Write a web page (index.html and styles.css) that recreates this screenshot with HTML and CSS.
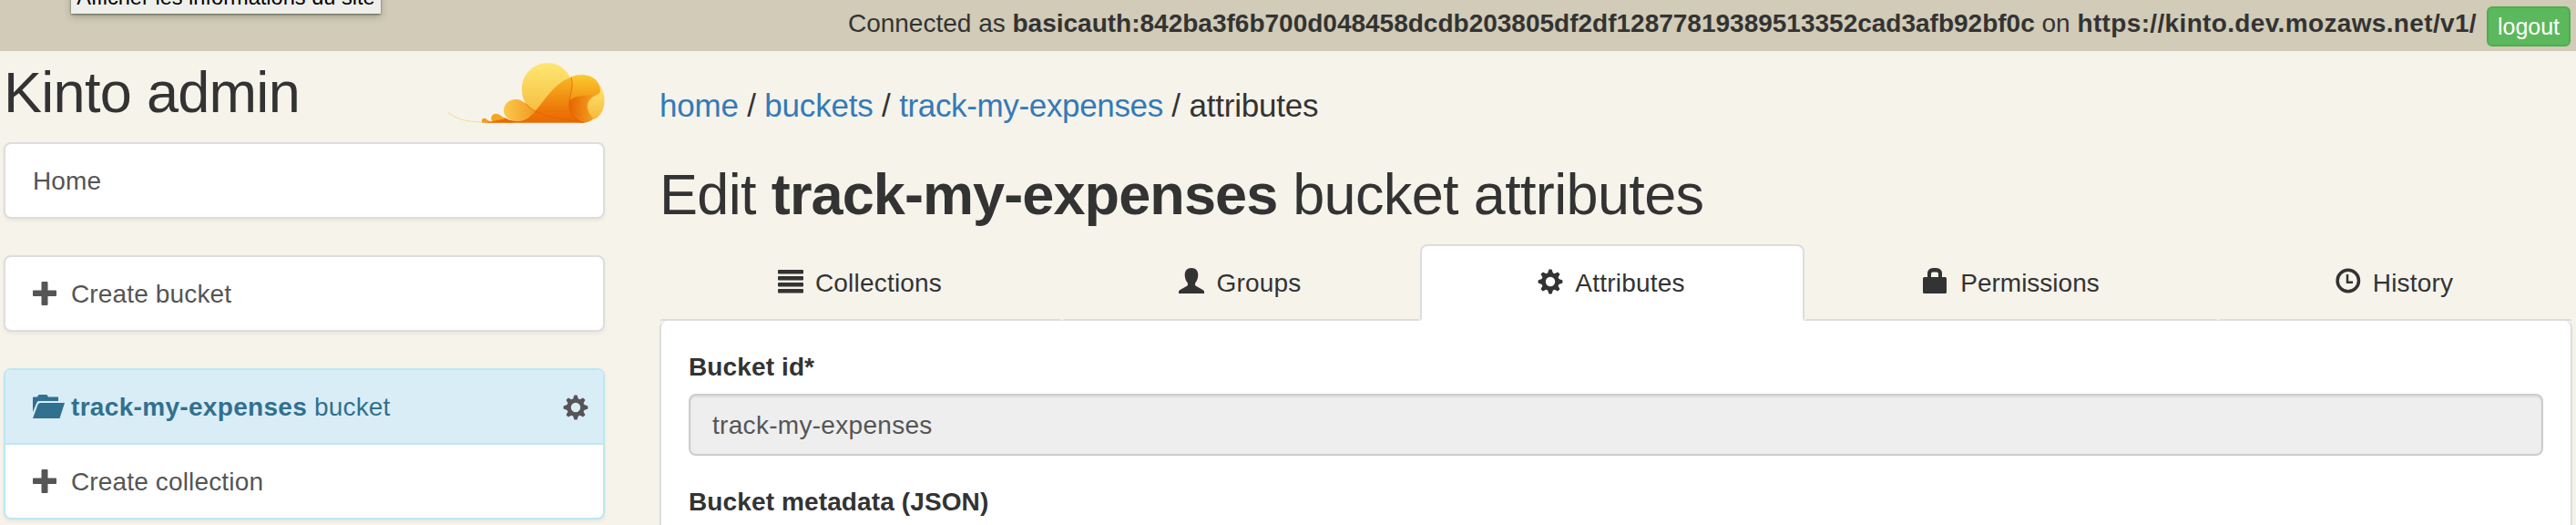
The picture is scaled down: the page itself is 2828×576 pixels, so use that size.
FILE: index.html
```html
<!DOCTYPE html>
<html lang="en">
<head>
<meta charset="utf-8">
<title>Kinto admin</title>
<link rel="stylesheet" href="styles.css">
</head>
<body>
<svg class="defs" width="0" height="0" aria-hidden="true">
  <symbol id="plus" viewBox="0 0 28 28"><path d="M10.500 1h5q1 0 1 1v8.500h8.500q1 0 1 1v4.500q0 1-1 1h-8.500v9q0 1-1 1h-5q-1 0-1-1v-9h-8.500q-1 0-1-1v-4.500q0-1 1-1h8.500v-8.500q0-1 1-1z"/></symbol>
  <symbol id="cog" viewBox="-14 -14 28 28"><path fill-rule="evenodd" d="M-1.500-13.500h3l1.400 4 1.800.8 3.400-1.900 2.400 2.400-1.900 3.400.8 1.900 4 1.400v3l-4 1.400-.8 1.900 1.900 3.400-2.400 2.400-3.400-1.900-1.800.8-1.400 4h-3l-1.400-4-1.800-.8-3.400 1.900-2.400-2.400 1.900-3.400-.8-1.900-4-1.400v-3l4-1.400.8-1.900-1.900-3.400 2.400-2.400 3.400 1.900 1.800-.8zM0-5.200a5.200 5.200 0 1 0 0 10.400a5.200 5.200 0 1 0 0-10.400z"/></symbol>
</svg>
<header class="session">
  <div class="tooltip">Afficher les informations du site</div>
  <span class="session-text">Connected as <strong>basicauth:842ba3f6b700d048458dcdb203805df2df12877819389513352cad3afb92bf0c</strong> on <strong class="server">https://kinto.dev.mozaws.net/v1/</strong></span>
  <button class="logout">logout</button>
</header>
<div class="layout">
  <aside class="sidebar">
    <div class="brand">
      <h1 class="title">Kinto admin</h1>
      <svg class="logo" viewBox="36 27 516 198">
        <defs>
          <linearGradient id="g1" x1="0" y1="0" x2="0" y2="1"><stop offset="0" stop-color="#fee773"/><stop offset="1" stop-color="#f6b93b"/></linearGradient>
          <linearGradient id="g2" x1="0" y1="0" x2="0" y2="1"><stop offset="0" stop-color="#f8b623"/><stop offset=".75" stop-color="#ec7508"/><stop offset="1" stop-color="#e86a03"/></linearGradient>
          <linearGradient id="g3" x1="0" y1="0" x2="0" y2="1"><stop offset="0" stop-color="#fccb30"/><stop offset="1" stop-color="#f0900f"/></linearGradient>
          <linearGradient id="g4" x1="0" y1="0" x2="1" y2="0"><stop offset="0" stop-color="#fbc94d"/><stop offset="1" stop-color="#f19a20"/></linearGradient>
          <linearGradient id="g5" x1="0" y1="0" x2="1" y2="0"><stop offset="0" stop-color="#e66602"/><stop offset="1" stop-color="#f4a321"/></linearGradient>
        </defs>
        <path d="M36 191C65 214 105 222 152 222" fill="none" stroke="#f6dc90" stroke-width="3"/>
        <path d="M148 224C144 213 150 208 156 209C164 211 166 218 176 219L182 224z" fill="#f29d20"/>
        <path d="M182 222C173 207 180 195 192 194C208 194 212 206 230 211L250 224z" fill="#f5a51f"/>
        <path d="M363 27C409 27 442 64 444 100C446 132 420 200 380 203C340 196 306 184 290 158C282 145 279 132 279 112C279 65 318 27 363 27z" fill="url(#g1)"/>
        <path d="M160 224L225 210C245 221 280 222 300 206C350 168 370 100 441 74C500 100 535 170 510 213Q496 224 480 224z" fill="url(#g2)"/>
        <path d="M258 147C287 147 299 172 323 187C301 211 284 219 262 219C238 219 219 204 219 184C219 162 237 147 258 147z" fill="url(#g4)"/>
        <path d="M534 98C551 119 555 151 547 176C541 196 527 210 514 213C470 190 490 150 510 135C525 135 538 125 534 98z" fill="url(#g1)"/>
        <path d="M441 73C452 68 463 66 478 66C515 66 537 92 537 117C537 130 524 135 510 135C475 133 446 139 434 157C439 130 450 112 441 73z" fill="url(#g3)"/>
        <path d="M436 151C451 137 476 133 521 135C498 144 490 164 497 184C501 196 507 205 515 211Q499 224 480 223C447 207 430 182 436 151z" fill="url(#g5)"/>
        <path d="M441 74C455 120 422 148 439 190C448 210 465 220 481 223M290 160C330 207 405 208 481 223M222 208C233 218 247 221 262 220" fill="none" stroke="#e05a00" stroke-opacity=".65" stroke-width="3"/>
      </svg>
    </div>
    <nav class="card"><a class="item">Home</a></nav>
    <nav class="card"><a class="item"><svg class="icon"><use href="#plus"/></svg>Create bucket</a></nav>
    <nav class="card card-info">
      <div class="item item-heading">
        <svg class="icon folder" viewBox="0 0 36 28"><path d="M0 4.500q0-1 1-1h4l1-1.800q.3-.7 1-.7h8q.7 0 1 .7l1 1.800h11v4.500H6.500q-1.500 0-2 1.500L0 20zM8.500 10H35l-5.500 17H0L5.500 12Q6.300 10 8.500 10z"/></svg>
        <span><strong class="bucket-name">track-my-expenses</strong> bucket</span>
        <svg class="icon settings"><use href="#cog"/></svg>
      </div>
      <a class="item"><svg class="icon"><use href="#plus"/></svg>Create collection</a>
    </nav>
  </aside>
  <main class="content">
    <div class="breadcrumb"><a>home</a> / <a>buckets</a> / <a class="bucket-link">track-my-expenses</a> / attributes</div>
    <h1 class="heading">Edit <b>track-my-expenses</b> bucket attributes</h1>
    <nav class="tabs">
      <a class="tab"><svg class="icon" viewBox="0 0 28 28"><path d="M1 1h26q1 0 1 1v2.500q0 1-1 1H1q-1 0-1-1V2q0-1 1-1zM1 8h26q1 0 1 1v2.500q0 1-1 1H1q-1 0-1-1V9q0-1 1-1zM1 15h26q1 0 1 1v2.500q0 1-1 1H1q-1 0-1-1V16q0-1 1-1zM1 22h26q1 0 1 1v2.500q0 1-1 1H1q-1 0-1-1V23q0-1 1-1z"/></svg>Collections</a>
      <a class="tab"><svg class="icon" viewBox="0 0 28 28"><path d="M14-1c4.700 0 7.300 3 7.300 7.500 0 4-1.300 6.500-2.800 8.500-.8 1.100-.8 3 .4 3.700l7.600 4.300q1.500.9 1.500 2v2H0v-2q0-1.100 1.500-2l7.600-4.300c1.200-.7 1.200-2.600.4-3.700C8 13 6.700 10.500 6.700 6.500 6.700 2 9.300-1 14-1z"/></svg>Groups</a>
      <a class="tab active"><svg class="icon"><use href="#cog"/></svg>Attributes</a>
      <a class="tab tab-permissions"><svg class="icon" viewBox="0 0 28 28"><path fill-rule="evenodd" d="M5 9V5.500Q5-1 11.500-1h3Q21-1 21 5.500V9h3.500Q26 9 26 10.500v15q0 1.500-1.500 1.500h-23Q0 27 0 25.500v-15Q0 9 1.500 9zM9 9h8V5.500Q17 3.500 15 3.500h-4Q9 3.500 9 5.500z"/></svg>Permissions</a>
      <a class="tab"><svg class="icon" viewBox="0 0 28 28"><circle class="stroke" cx="13.800" cy="13" r="11.700"/><path class="stroke-thin" d="M13 6v8.700h6"/></svg>History</a>
    </nav>
    <section class="panel">
      <label class="label">Bucket id*</label>
      <div class="input">track-my-expenses</div>
      <label class="label">Bucket metadata (JSON)</label>
    </section>
  </main>
</div>
</body>
</html>
```
FILE: styles.css
```css
* { box-sizing: border-box; }
body {
  margin: 0;
  height: 576px;
  overflow: hidden;
  background: #f6f3eb;
  color: #333;
  font: 28px/40px "Liberation Sans", Arial, sans-serif;
}
.defs { position: absolute; }
h1 { margin: 0; font-weight: 400; font-size: 63px; line-height: 70px; white-space: nowrap; }
a { color: inherit; text-decoration: none; }

.session {
  position: relative;
  display: flex;
  justify-content: flex-end;
  align-items: flex-start;
  height: 56px;
  padding: 6px 6px 0 0;
  background: #d1cbb7;
  white-space: nowrap;
}
.session-text { margin-right: 11px; }
.server { letter-spacing: .35px; }
.logout {
  width: 92px;
  height: 44px;
  margin-top: 1px;
  padding: 0;
  border: 2px solid #4cae4c;
  border-radius: 6px;
  background: #5cb85c;
  color: #fff;
  font: 25px/38px "Liberation Sans", Arial, sans-serif;
}
.tooltip {
  position: absolute;
  left: 78px;
  top: -17px;
  width: 340px;
  height: 32px;
  background: #eeefeb;
  color: #000;
  font-size: 23.600px;
  line-height: 29px;
  text-align: center;
  box-shadow: 0 1px 2px rgba(60, 70, 50, .7), 0 3px 8px rgba(60, 70, 50, .3);
}

.layout { display: grid; grid-template-columns: 660px 2100px; column-gap: 60px; height: 520px; padding-left: 4px; }
.brand { display: flex; justify-content: space-between; height: 100px; padding-top: 10px; }
.title { letter-spacing: -.7px; }
.logo { width: 172px; height: 66px; margin-top: 3px; overflow: visible; }

.card {
  margin-bottom: 40px;
  border: 2px solid #ddd;
  border-radius: 8px;
  background: #fff;
  color: #555;
  overflow: hidden;
  box-shadow: 0 2px 4px rgba(0, 0, 0, .06);
}
.card:last-child { margin-bottom: 0; }
.card-info { border-color: #bce8f1; }
.item { display: flex; align-items: center; height: 80px; padding: 2px 16px 0 30px; letter-spacing: .15px; }
.item-heading { height: 82px; border-bottom: 2px solid #bce8f1; background: #d9edf7; color: #31708f; }
.icon { flex: none; width: 28px; height: 28px; margin: -2px 14px 0 0; fill: currentColor; overflow: visible; }
.folder { width: 36px; margin-right: 6px; }
.bucket-name { letter-spacing: .32px; }
.settings { margin: 0 0 0 auto; color: #555; }

.breadcrumb { margin-top: 40px; font-size: 35px; letter-spacing: -.2px; white-space: nowrap; }
.breadcrumb a { color: #337ab7; }
.breadcrumb .bucket-link { letter-spacing: -.35px; }
.heading { margin-top: 42px; letter-spacing: -.65px; }
.heading b { letter-spacing: -.9px; }

.tabs { display: grid; grid-template-columns: 442px 393px 422px 454px 389px; margin-top: 20px; }
.tab {
  display: flex;
  align-items: center;
  justify-content: center;
  height: 84px;
  padding: 2px 2px 0 0;
  border: 2px solid transparent;
  border-bottom-color: #ddd;
  border-radius: 8px 8px 0 0;
  letter-spacing: .2px;
}
.tab .icon { margin: -4px 13px 0 0; }
.tab-permissions { padding-right: 0; letter-spacing: 0; }
.tab.active { border-color: #ddd #ddd #fff; background: #fff; }
.stroke { fill: none; stroke: currentColor; stroke-width: 3.500; }
.stroke-thin { fill: none; stroke: currentColor; stroke-width: 2.500; }

.panel {
  height: 224px;
  padding: 31px 30px 0;
  border: solid #ddd;
  border-width: 0 2px;
  border-radius: 8px 8px 0 0;
  background: #fff;
  box-shadow: 0 2px 2px rgba(0, 0, 0, .05);
}
.label { display: block; margin-bottom: 9px; font-weight: 700; letter-spacing: .12px; }
.input {
  height: 68px;
  margin-bottom: 31px;
  padding: 13px 24px 0;
  border: 2px solid #ccc;
  border-radius: 8px;
  background: #eee;
  color: #555;
  letter-spacing: .3px;
  box-shadow: inset 0 2px 2px rgba(0, 0, 0, .075);
}
.panel .label:last-child { margin-bottom: 0; }
```
